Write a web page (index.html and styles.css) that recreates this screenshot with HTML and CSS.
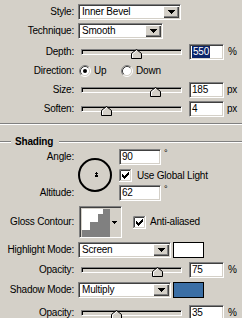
FILE: index.html
```html
<!DOCTYPE html>
<html>
<head>
<meta charset="utf-8">
<link rel="stylesheet" href="styles.css">
</head>
<body>
<div class="panel">
  <div class="row r-style">
    <span class="lbl">Style:</span>
    <div class="select sunken w-style"><span class="val">Inner Bevel</span><span class="dd-btn"><svg width="7" height="4" viewBox="0 0 7 4"><path d="M0 0h7v1H0zM1 1h5v1H1zM2 2h3v1H2zM3 3h1v1H3z"/></svg></span></div>
  </div>
  <div class="row r-tech">
    <span class="lbl">Technique:</span>
    <div class="select sunken w-tech"><span class="val">Smooth</span><span class="dd-btn"><svg width="7" height="4" viewBox="0 0 7 4"><path d="M0 0h7v1H0zM1 1h5v1H1zM2 2h3v1H2zM3 3h1v1H3z"/></svg></span></div>
  </div>
  <div class="row r-depth">
    <span class="lbl">Depth:</span>
    <div class="slider"><div class="track"></div><svg class="thumb" style="left:50px" width="11" height="10" viewBox="0 0 11 10"><polygon points="0.5,9.5 0.5,4.5 5.5,0.5 10.5,4.5 10.5,9.5" fill="#d4d0c8" stroke="#000"/><polyline points="1.5,9 1.5,5 5.5,1.8" fill="none" stroke="#fff"/></svg></div>
    <div class="num sunken"><span class="sel">550</span></div>
    <span class="unit">%</span>
  </div>
  <div class="row r-dir">
    <span class="lbl">Direction:</span>
    <div class="opt opt-up"><svg class="radio" width="12" height="12" viewBox="0 0 12 12"><circle cx="6" cy="6" r="4.5" fill="#fff"/><path d="M2.11 9.89A5.5 5.5 0 0 1 9.89 2.11" fill="none" stroke="#808080"/><path d="M9.89 2.11A5.5 5.5 0 0 1 2.11 9.89" fill="none" stroke="#fff"/><path d="M2.82 9.18A4.5 4.5 0 0 1 9.18 2.82" fill="none" stroke="#404040"/><path d="M9.18 2.82A4.5 4.5 0 0 1 2.82 9.18" fill="none" stroke="#d4d0c8"/><circle cx="6" cy="6" r="2"/></svg><span>Up</span></div>
    <div class="opt"><svg class="radio" width="12" height="12" viewBox="0 0 12 12"><circle cx="6" cy="6" r="4.5" fill="#fff"/><path d="M2.11 9.89A5.5 5.5 0 0 1 9.89 2.11" fill="none" stroke="#808080"/><path d="M9.89 2.11A5.5 5.5 0 0 1 2.11 9.89" fill="none" stroke="#fff"/><path d="M2.82 9.18A4.5 4.5 0 0 1 9.18 2.82" fill="none" stroke="#404040"/><path d="M9.18 2.82A4.5 4.5 0 0 1 2.82 9.18" fill="none" stroke="#d4d0c8"/></svg><span>Down</span></div>
  </div>
  <div class="row r-size">
    <span class="lbl">Size:</span>
    <div class="slider"><div class="track"></div><svg class="thumb" style="left:69px" width="11" height="10" viewBox="0 0 11 10"><polygon points="0.5,9.5 0.5,4.5 5.5,0.5 10.5,4.5 10.5,9.5" fill="#d4d0c8" stroke="#000"/><polyline points="1.5,9 1.5,5 5.5,1.8" fill="none" stroke="#fff"/></svg></div>
    <div class="num sunken">185</div>
    <span class="unit px">px</span>
  </div>
  <div class="row r-soften">
    <span class="lbl">Soften:</span>
    <div class="slider"><div class="track"></div><svg class="thumb" style="left:20px" width="11" height="10" viewBox="0 0 11 10"><polygon points="0.5,9.5 0.5,4.5 5.5,0.5 10.5,4.5 10.5,9.5" fill="#d4d0c8" stroke="#000"/><polyline points="1.5,9 1.5,5 5.5,1.8" fill="none" stroke="#fff"/></svg></div>
    <div class="num sunken">4</div>
    <span class="unit px">px</span>
  </div>

  <div class="sep"></div>

  <div class="group-head"><span class="gl gl-left"></span><b>Shading</b><span class="gl gl-right"></span></div>

  <div class="angle-grid">
    <span class="lbl a-lbl">Angle:</span>
    <svg class="dial" width="34" height="34" viewBox="0 0 34 34"><circle cx="17" cy="17" r="16" fill="none" stroke="#000" stroke-width="2"/><path d="M18 14h1v3h-1zM17 15h3v1h-3z"/><rect x="17" y="17" width="3" height="2"/></svg>
    <div class="a-in"><div class="num sunken wide">90</div><span class="deg">°</span></div>
    <div class="a-chk"><svg class="chk" width="13" height="13" viewBox="0 0 13 13"><rect width="13" height="13" fill="#fff"/><path d="M0.5 12V0.5H12" fill="none" stroke="#808080"/><path d="M1.5 11V1.5H11" fill="none" stroke="#404040"/><path d="M0 12.5H12.5V0" fill="none" stroke="#fff"/><path d="M1 11.5H11.5V1" fill="none" stroke="#d4d0c8"/><path d="M3 5h1v3H3zM4 6h1v3H4zM5 7h1v3H5zM6 6h1v3H6zM7 5h1v3H7zM8 4h1v3H8zM9 3h1v3H9z"/></svg><span>Use Global Light</span></div>
    <span class="lbl b-lbl">Altitude:</span>
    <div class="b-in"><div class="num sunken wide">62</div><span class="deg">°</span></div>
  </div>

  <div class="row r-gloss">
    <span class="lbl">Gloss Contour:</span>
    <div class="contour sunken"><svg width="28" height="28" viewBox="0 0 28 28"><rect width="28" height="28" fill="#fff"/><path d="M21 0H28V28H0V21H8V13H16V5H21Z" fill="#808080"/></svg><span class="c-btn"><svg width="5" height="3" viewBox="0 0 5 3"><path d="M0 0h5v1H0zM1 1h3v1H1zM2 2h1v1H2z"/></svg></span></div>
    <div class="aa"><svg class="chk" width="13" height="13" viewBox="0 0 13 13"><rect width="13" height="13" fill="#fff"/><path d="M0.5 12V0.5H12" fill="none" stroke="#808080"/><path d="M1.5 11V1.5H11" fill="none" stroke="#404040"/><path d="M0 12.5H12.5V0" fill="none" stroke="#fff"/><path d="M1 11.5H11.5V1" fill="none" stroke="#d4d0c8"/><path d="M3 5h1v3H3zM4 6h1v3H4zM5 7h1v3H5zM6 6h1v3H6zM7 5h1v3H7zM8 4h1v3H8zM9 3h1v3H9z"/></svg><span>Anti-aliased</span></div>
  </div>

  <div class="row r-hl">
    <span class="lbl">Highlight Mode:</span>
    <div class="select sunken w-mode"><span class="val">Screen</span><span class="dd-btn"><svg width="7" height="4" viewBox="0 0 7 4"><path d="M0 0h7v1H0zM1 1h5v1H1zM2 2h3v1H2zM3 3h1v1H3z"/></svg></span></div>
    <span class="swatch sw-white"></span>
  </div>
  <div class="row r-op1">
    <span class="lbl">Opacity:</span>
    <div class="slider"><div class="track"></div><svg class="thumb" style="left:71px" width="11" height="10" viewBox="0 0 11 10"><polygon points="0.5,9.5 0.5,4.5 5.5,0.5 10.5,4.5 10.5,9.5" fill="#d4d0c8" stroke="#000"/><polyline points="1.5,9 1.5,5 5.5,1.8" fill="none" stroke="#fff"/></svg></div>
    <div class="num sunken">75</div>
    <span class="unit">%</span>
  </div>
  <div class="row r-sh">
    <span class="lbl">Shadow Mode:</span>
    <div class="select sunken w-mode"><span class="val">Multiply</span><span class="dd-btn"><svg width="7" height="4" viewBox="0 0 7 4"><path d="M0 0h7v1H0zM1 1h5v1H1zM2 2h3v1H2zM3 3h1v1H3z"/></svg></span></div>
    <span class="swatch sw-blue"></span>
  </div>
  <div class="row r-op2">
    <span class="lbl">Opacity:</span>
    <div class="slider"><div class="track"></div><svg class="thumb" style="left:30px" width="11" height="10" viewBox="0 0 11 10"><polygon points="0.5,9.5 0.5,4.5 5.5,0.5 10.5,4.5 10.5,9.5" fill="#d4d0c8" stroke="#000"/><polyline points="1.5,9 1.5,5 5.5,1.8" fill="none" stroke="#fff"/></svg></div>
    <div class="num sunken">35</div>
    <span class="unit">%</span>
  </div>
</div>
</body>
</html>
```

FILE: styles.css
```css
* { box-sizing: border-box; margin: 0; padding: 0; }
html, body { background: #d4d0c8; }
body {
  width: 242px;
  height: 318px;
  overflow: hidden;
  font-family: "Liberation Sans", Arial, sans-serif;
  font-size: 10px;
  letter-spacing: -0.2px;
  color: #000;
  line-height: 12px;
}
svg { display: block; flex: none; }
.panel { padding-top: 4px; display: flex; flex-direction: column; }
.row { display: flex; align-items: center; height: 16px; flex: none; }
.lbl { width: 74px; flex: none; text-align: right; white-space: nowrap; }

.sunken {
  border: 1px solid;
  border-color: #808080 #fff #fff #808080;
  box-shadow: inset 1px 1px #404040, inset -1px -1px #d4d0c8;
}

.select {
  height: 16px;
  margin-left: 4px;
  background: #fff;
  display: flex;
  align-items: center;
  padding: 2px 1px 2px 3px;
  flex: none;
}
.w-style { width: 103px; }
.w-tech { width: 85px; }
.w-mode { width: 93px; }
.select .val { flex: 1; white-space: nowrap; }
.dd-btn {
  width: 16px;
  height: 12px;
  background: #d4d0c8;
  box-shadow: inset 1px 1px #fff, inset -1px -1px #404040, inset -2px -2px #808080;
  display: flex;
  align-items: center;
  justify-content: center;
  padding-bottom: 1px;
}

.r-tech { margin-top: 3px; }
.r-depth { margin-top: 5px; }
.r-dir { margin-top: 4px; height: 14px; }
.r-size { margin-top: 4px; }
.r-soften { margin-top: 3px; }

.slider {
  position: relative;
  width: 101px;
  height: 16px;
  margin-left: 7px;
  padding-top: 5px;
  flex: none;
}
.track {
  height: 6px;
  border: 1px solid;
  border-color: #808080 #fff #fff #808080;
  box-shadow: inset 1px 1px #000, inset -1px -1px #d4d0c8;
  background: #d4d0c8;
}
.thumb { position: absolute; top: 5px; }

.num {
  width: 35px;
  height: 16px;
  margin-left: 7px;
  background: #fff;
  padding-left: 2px;
  display: flex;
  align-items: center;
  flex: none;
}
.num.wide { width: 42px; margin-left: 0; }
.sel { background: #0a246a; color: #fff; padding: 0 1px; line-height: 12px; }
.unit { margin-left: 4px; }
.unit.px { margin-left: 3px; }

.opt { display: flex; align-items: center; gap: 3px; }
.opt-up { margin-left: 5px; width: 42px; }

.sep {
  height: 2px;
  margin-top: 6px;
  border-top: 1px solid #808080;
  border-bottom: 1px solid #fff;
  flex: none;
}
.group-head {
  display: flex;
  align-items: center;
  height: 12px;
  margin-top: 11px;
  flex: none;
}
.gl { height: 2px; border-top: 1px solid #808080; border-bottom: 1px solid #fff; }
.gl-left { width: 11px; flex: none; }
.gl-right { flex: 1; }
.group-head b { padding: 0 6px 0 4px; font-weight: bold; }

.angle-grid {
  margin-top: 1px;
  display: grid;
  grid-template-columns: 74px 45px 1fr;
  grid-template-rows: 16px 13px 16px;
  row-gap: 4px;
  row-gap: 0;
  flex: none;
}
.angle-grid { grid-template-rows: 16px 4px 13px 3px 16px; }
.a-lbl { grid-row: 1; grid-column: 1; align-self: center; }
.dial { grid-row: 1 / 6; grid-column: 2; align-self: center; margin-left: 4px; }
.a-in { grid-row: 1; grid-column: 3; display: flex; }
.a-chk { grid-row: 3; grid-column: 3; display: flex; align-items: center; gap: 5px; }
.b-lbl { grid-row: 5; grid-column: 1; align-self: center; }
.b-in { grid-row: 5; grid-column: 3; display: flex; }
.deg { margin-left: 3px; font-size: 9px; line-height: 8px; }

.r-gloss { margin-top: 5px; height: 32px; }
.contour {
  width: 43px;
  height: 32px;
  margin-left: 5px;
  padding: 2px;
  display: flex;
  background: #d4d0c8;
  flex: none;
}
.c-btn { flex: 1; display: flex; align-items: center; justify-content: center; }
.aa { display: flex; align-items: center; gap: 4px; margin-left: 11px; }

.r-hl { margin-top: 4px; }
.r-op1 { margin-top: 4px; }
.r-sh { margin-top: 4px; }
.r-op2 { margin-top: 7px; }
.swatch {
  width: 31px;
  height: 16px;
  margin-left: 2px;
  border: 1px solid #000;
  box-shadow: 0 0 0 0 transparent;
  flex: none;
}
.sw-white { background: #fff; }
.sw-blue { background: #3a6ea5; }
```
